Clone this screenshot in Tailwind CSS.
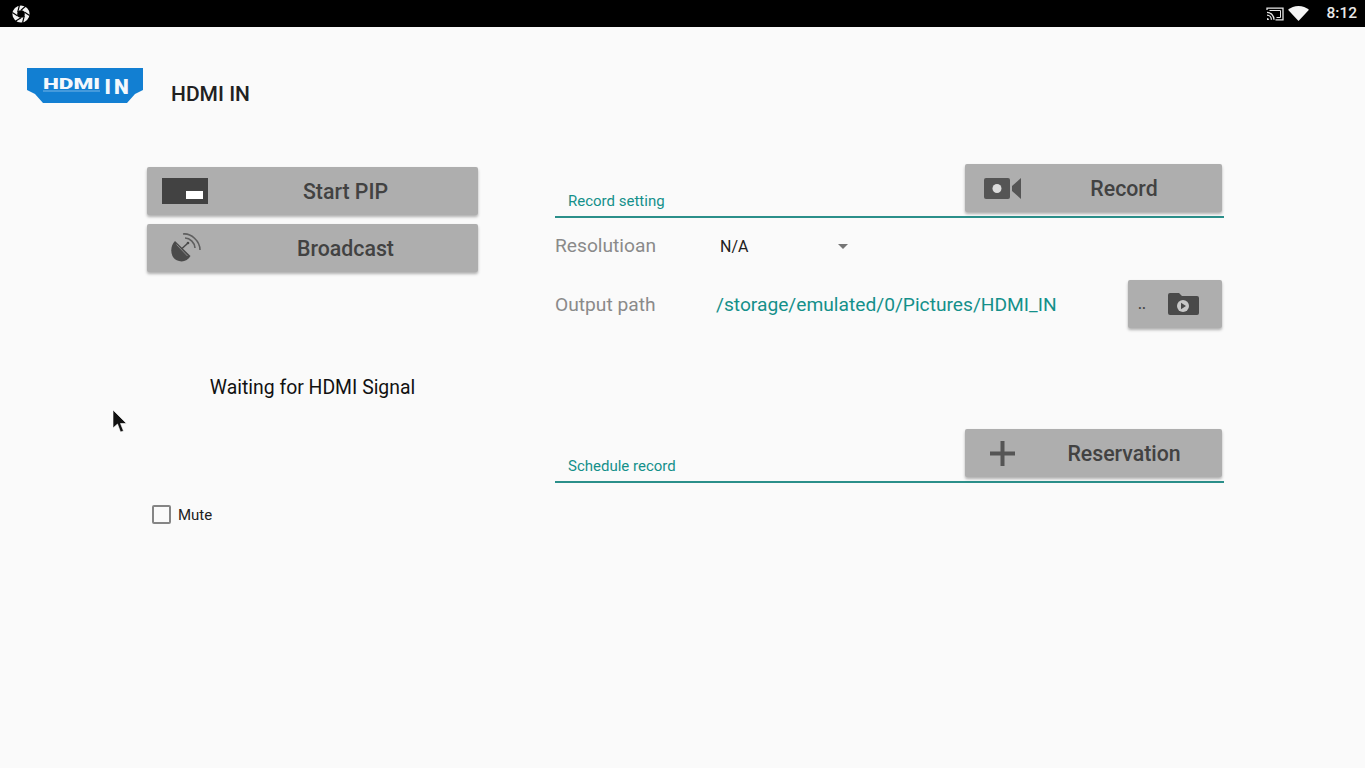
<!DOCTYPE html>
<html lang="en">
<head>
  <meta charset="UTF-8">
  <title>HDMI IN</title>
  <script src="https://cdn.jsdelivr.net/npm/@tailwindcss/browser@4"></script>
</head>
<body class="relative h-[768px] w-[1365px] overflow-hidden bg-[#fafafa] font-['Roboto',sans-serif]">
  <!-- status bar -->
  <div class="flex h-[27px] items-center bg-black pl-[12px] pr-[8px]">
    <svg width="18" height="18" viewBox="0 0 18 18">
      <circle cx="9" cy="9" r="8.6" fill="#f2f2f2"/>
      <g stroke="#000" stroke-width="1.2" fill="none">
        <path d="M9 5.2 L14 .8"/><path d="M12.3 7.1 L17.6 10.4"/><path d="M12.3 10.9 L10.6 17.6"/>
        <path d="M9 12.8 L3.8 16"/><path d="M5.7 10.9 L.4 7.6"/><path d="M5.7 7.1 L7.4 .4"/>
      </g>
      <circle cx="9" cy="9" r="3.8" fill="#000"/>
    </svg>
    <div class="ml-auto flex items-center">
      <svg width="18" height="14" viewBox="0 0 18 14" fill="none" stroke="#e6e6e6" stroke-width="1.3">
        <path d="M1 3V1.2h16v11.6H9.5"/>
        <path d="M1 5.4c3.800 0 7 3.200 7 7.400M1 8.200c2.400 0 4.400 2 4.400 4.600"/>
        <path d="M1 11a2 2 0 0 1 2 2H1z" fill="#e6e6e6" stroke="none"/>
        <path d="M3.500 3.500h11v7h-4" stroke-width="1"/>
      </svg>
      <svg class="ml-[4px]" width="21" height="15" viewBox="0 0 21 15"><path d="M0 3.800C2.900 1.400 6.500 0 10.500 0s7.600 1.400 10.500 3.800L10.500 15z" fill="#f5f5f5"/></svg>
      <span class="ml-[17px] text-[15.500px] font-medium leading-none text-[#e8e8e8]">8:12</span>
    </div>
  </div>

  <!-- app title -->
  <div class="mt-[41px] flex h-[35px] items-start pl-[27px]">
    <svg width="116" height="35" viewBox="0 0 116 35">
      <path d="M0 0H116V22L108 26L100 35H16L8 26L0 22z" fill="#127fd2"/>
      <text x="16" y="21" textLength="57" lengthAdjust="spacingAndGlyphs" font-family="Roboto" font-weight="900" font-size="14" fill="#f4f8fc">HDMI</text>
      <rect x="16" y="22.500" width="57" height="1" fill="#f4f8fc" fill-opacity=".45"/>
      <text x="77.500" y="26" font-family="Roboto" font-weight="900" font-size="21" fill="#f4f8fc">I</text>
      <text x="87" y="26" font-family="Roboto" font-weight="900" font-size="21" fill="#f4f8fc">N</text>
    </svg>
    <h1 class="ml-[28px] mt-[12px] text-[21px] font-medium leading-[28px] text-[#212121]">HDMI IN</h1>
  </div>

  <div class="mt-[61px] flex items-start">
    <!-- left column -->
    <div class="ml-[147px] mt-[3px] w-[331px]">
      <button class="flex h-[48px] w-full items-center rounded-[2px] bg-[#aeaeae] text-[21.300px] font-medium text-[#424242] shadow-[0_2px_3px_rgba(0,0,0,0.3)]">
        <span class="w-[66px] shrink-0 pl-[15px]">
          <span class="flex h-[26px] w-[46px] items-end justify-end bg-[#424242] pb-[5px] pr-[5px]"><span class="h-[8px] w-[17px] bg-white"></span></span>
        </span>
        <span class="flex-1 pt-[1px] text-center">Start PIP</span>
      </button>
      <button class="mt-[9px] flex h-[48px] w-full items-center rounded-[2px] bg-[#aeaeae] text-[21.300px] font-medium text-[#424242] shadow-[0_2px_3px_rgba(0,0,0,0.3)]">
        <span class="w-[66px] shrink-0 pl-[23px]">
          <svg class="block" width="31" height="30" viewBox="0 0 31 30">
            <path d="M5 8L20.500 23C17 30 7 30 3 24C0 19 1 12 5 8z" fill="#4a4a4a"/>
            <path d="M6.500 11.500L17.500 23" stroke="#8a8a8a" stroke-width="1"/>
            <path d="M12 15.500L18 10" stroke="#4a4a4a" stroke-width="1.500"/>
            <circle cx="18" cy="10" r="1.300" fill="#4a4a4a"/>
            <g fill="none" stroke="#5f5f5f" stroke-width="1.600">
              <path d="M15 5C20 5 25 10 25 15"/><path d="M13 1C21 0 30 8 30 17"/>
            </g>
          </svg>
        </span>
        <span class="flex-1 pt-[1px] text-center">Broadcast</span>
      </button>
      <p class="mt-[104px] text-center text-[19.400px] leading-[24px] text-[#111]">Waiting for HDMI Signal</p>
      <label class="mt-[102px] flex h-[24px] items-center pl-[5px]">
        <span class="h-[19px] w-[19px] rounded-[2px] border-2 border-[#858585]"></span>
        <span class="ml-[7px] pt-[3px] text-[15px] text-[#212121]">Mute</span>
      </label>
    </div>

    <!-- right column -->
    <div class="ml-[77px] w-[669px]">
      <div class="flex items-end justify-between border-b-2 border-[#2b8f8a] pb-[4px] pr-[2px]">
        <span class="mb-[1px] pl-[13px] text-[15px] leading-[20px] text-[#14908a]">Record setting</span>
        <button class="flex h-[48px] w-[257px] items-center rounded-[2px] bg-[#aeaeae] text-[21.300px] font-medium text-[#424242] shadow-[0_2px_3px_rgba(0,0,0,0.3)]">
          <span class="w-[61px] shrink-0 pl-[19px]">
            <svg class="block" width="37" height="21" viewBox="0 0 37 21">
              <rect width="26" height="21" rx="2" fill="#555"/>
              <circle cx="13" cy="10.500" r="4.500" fill="#dcdcdc"/>
              <path d="M28 8L37 0V21L28 13z" fill="#555"/>
            </svg>
          </span>
          <span class="flex-1 pt-[1px] text-center">Record</span>
        </button>
      </div>

      <div class="flex h-[57px] items-center">
        <span class="w-[165px] text-[19.200px] text-[#8a8a8a]">Resolutioan</span>
        <span class="w-[118px] text-[16px] text-[#212121]">N/A</span>
        <span class="h-0 w-0 border-x-[5px] border-t-[5px] border-x-transparent border-t-[#757575]"></span>
      </div>

      <div class="mt-[5px] flex h-[48px] items-center pr-[2px]">
        <span class="w-[161px] shrink-0 pt-[2px] text-[19.200px] text-[#8a8a8a]">Output path</span>
        <span class="pt-[2px] text-[19.200px] text-[#14908a]">/storage/emulated/0/Pictures/HDMI_IN</span>
        <button class="ml-auto flex h-[48px] w-[94px] items-center rounded-[2px] bg-[#aeaeae] pl-[10px] text-[14px] font-medium text-[#424242] shadow-[0_2px_3px_rgba(0,0,0,0.3)]">
          <span class="w-[30px] text-left">..</span>
          <svg class="block" width="31" height="22" viewBox="0 0 31 22">
            <path d="M0 2a2 2 0 0 1 2-2h9l3 3h15a2 2 0 0 1 2 2v15a2 2 0 0 1-2 2H2a2 2 0 0 1-2-2z" fill="#4a4a4a"/>
            <circle cx="15" cy="13" r="6" fill="#c8c8c8"/>
            <path d="M13 9.800V16.200L18 13z" fill="#4a4a4a"/>
          </svg>
        </button>
      </div>

      <div class="mt-[101px] flex items-end justify-between border-b-2 border-[#2b8f8a] pb-[4px] pr-[2px]">
        <span class="mb-[1px] pl-[13px] text-[15px] leading-[20px] text-[#14908a]">Schedule record</span>
        <button class="flex h-[48px] w-[257px] items-center rounded-[2px] bg-[#aeaeae] text-[21.300px] font-medium text-[#424242] shadow-[0_2px_3px_rgba(0,0,0,0.3)]">
          <span class="w-[61px] shrink-0 pl-[25px]">
            <svg class="block" width="25" height="25" viewBox="0 0 25 25"><path d="M10.500 0h4v10.500H25v4H14.500V25h-4V14.500H0v-4h10.500z" fill="#555"/></svg>
          </span>
          <span class="flex-1 pt-[1px] text-center">Reservation</span>
        </button>
      </div>
    </div>
  </div>

  <!-- mouse pointer -->
  <svg class="absolute left-[111px] top-[409px]" width="18" height="26" viewBox="0 0 18 26">
    <path d="M2 1V19L6.500 15L9.500 23L12.500 22L9.500 14.500H15.500z" fill="#111" stroke="#fff" stroke-opacity=".6" stroke-width="1"/>
  </svg>
</body>
</html>
